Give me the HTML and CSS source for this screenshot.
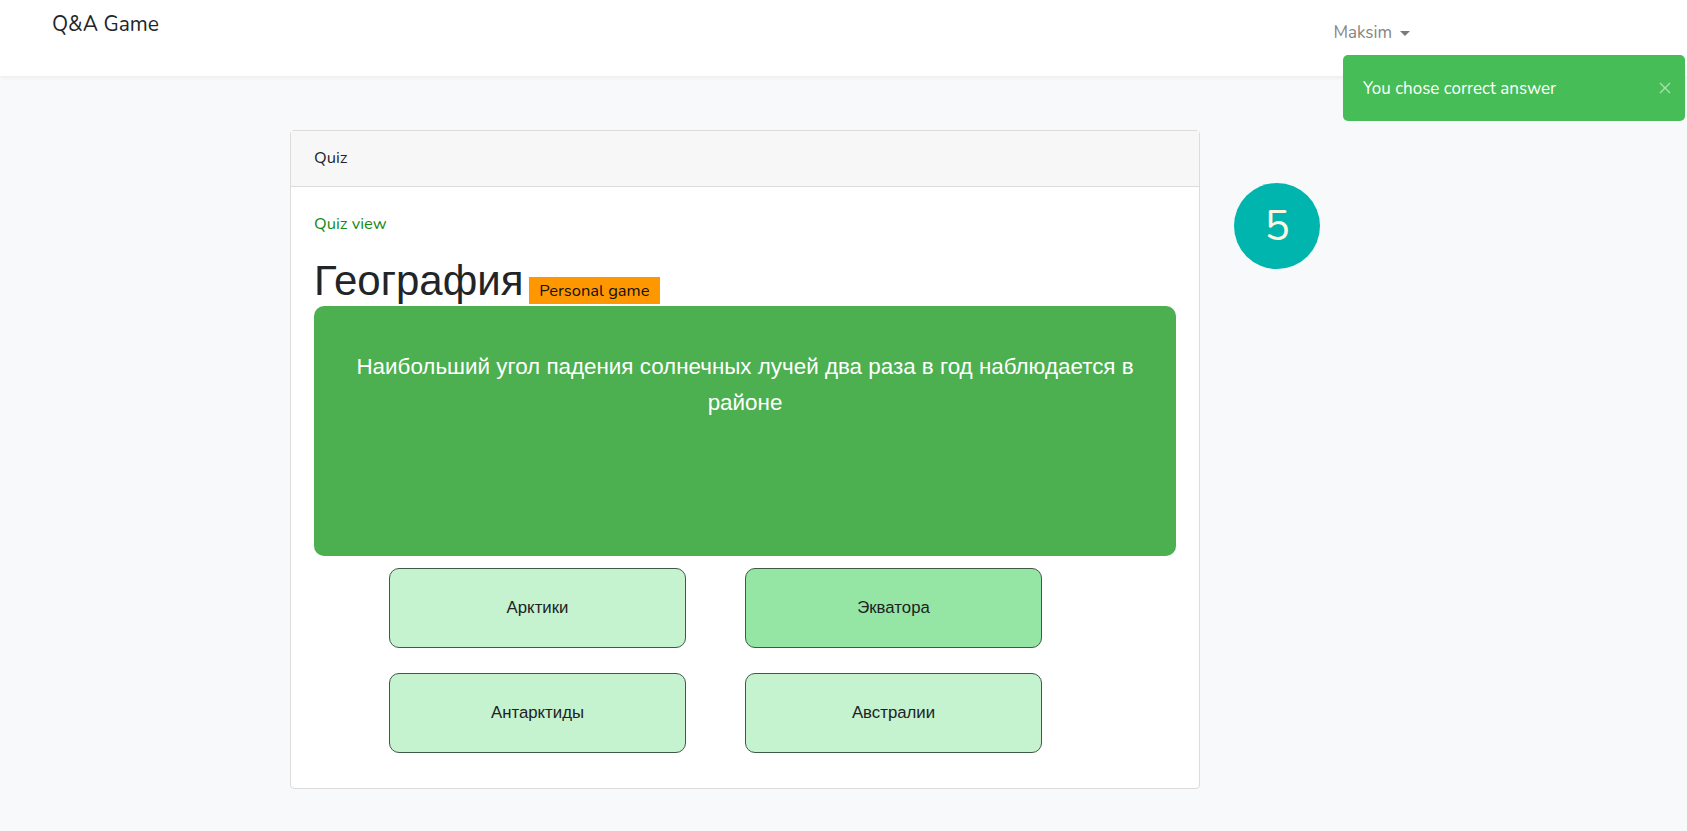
FILE: index.html
```html
<!DOCTYPE html>
<html lang="ru">
<head>
<meta charset="utf-8">
<title>Q&amp;A Game</title>
<link rel="stylesheet" href="styles.css">
</head>
<body>
<nav class="navbar">
  <a class="brand" href="#">Q&amp;A Game</a>
  <div class="user">Maksim <span class="caret"></span></div>
</nav>

<div class="toast">
  <span class="toast-text">You chose correct answer</span>
  <svg class="toast-close" width="12" height="12" viewBox="0 0 12 12"><path d="M1 1L11 11M11 1L1 11" stroke="currentColor" stroke-width="1.4" fill="none"/></svg>
</div>

<main class="page">
  <section class="card">
    <header class="card-header">Quiz</header>
    <div class="card-body">
      <div class="quiz-link">Quiz view</div>
      <h1 class="title">География <span class="badge">Personal game</span></h1>
      <div class="question">Наибольший угол падения солнечных лучей два раза в год наблюдается в районе</div>
      <div class="answers">
        <button class="answer">Арктики</button>
        <button class="answer selected">Экватора</button>
        <button class="answer">Антарктиды</button>
        <button class="answer">Австралии</button>
      </div>
    </div>
  </section>
  <div class="score">5</div>
</main>
</body>
</html>
```
FILE: styles.css
```css
* { box-sizing: border-box; }
html, body { margin: 0; }
body {
  background: #f8f9fa;
  font-family: "Nunito", "Lato", "Open Sans", sans-serif;
  font-size: 16px;
  color: #212529;
  width: 1687px;
  height: 831px;
  overflow: hidden;
}
.navbar {
  height: 76px;
  background: #fff;
  box-shadow: 0 2px 4px rgba(0,0,0,0.05);
  display: flex;
  justify-content: space-between;
  padding: 10px 0 0 52px;
  position: relative;
}
.brand {
  font-size: 21px;
  color: #212529;
  text-decoration: none;
  line-height: 28px;
}
.user {
  margin-right: 277px;
  margin-top: 14px;
  color: #848484;
  font-size: 17px;
  line-height: 18px;
  display: flex;
  align-items: center;
  gap: 8px;
  height: 18px;
}
.caret {
  width: 0; height: 0;
  border-left: 5px solid transparent;
  border-right: 5px solid transparent;
  border-top: 5px solid #7a7a7a;
}
.toast {
  position: absolute;
  left: 1343px;
  top: 55px;
  width: 342px;
  height: 66px;
  background: #46bd56;
  border-radius: 5px;
  display: flex;
  align-items: center;
  justify-content: space-between;
  padding: 0 14px 0 20px;
  color: #fff;
  font-size: 17px;
  z-index: 5;
}
.toast-close { color: #a8e2ae; }
.page {
  display: flex;
  align-items: flex-start;
  padding: 54px 0 0 290px;
  gap: 34px;
}
.card {
  width: 910px;
  background: #fff;
  border: 1px solid #dcdcdc;
  border-radius: 4px;
}
.card-header {
  height: 56px;
  background: #f7f7f7;
  border-bottom: 1px solid #dcdcdc;
  padding: 0 23px 3px;
  display: flex;
  align-items: center;
  font-size: 16.5px;
}
.card-body {
  padding: 25px 23px 35px;
}
.quiz-link {
  color: #138a13;
  font-size: 16.5px;
  line-height: 24px;
}
.title {
  margin: 20px 0 0;
  font-family: "Liberation Sans", Arial, sans-serif;
  font-weight: 400;
  font-size: 42px;
  line-height: 50px;
  color: #212529;
}
.badge {
  display: inline-block;
  vertical-align: -1px;
  background: #ff9800;
  color: #111;
  font-family: "Nunito", "Lato", "Open Sans", sans-serif;
  font-size: 16.5px;
  line-height: 27px;
  padding: 0 10px;
  margin-left: -6px;
}
.question {
  height: 250px;
  background: #4caf50;
  border-radius: 10px;
  color: #fff;
  font-family: "Liberation Sans", Arial, sans-serif;
  font-size: 22.4px;
  line-height: 36px;
  text-align: center;
  padding: 43px 30px 0;
}
.answers {
  display: grid;
  grid-template-columns: 297px 297px;
  column-gap: 59px;
  row-gap: 25px;
  margin: 12px 0 0 75px;
}
.answer {
  height: 80px;
  background: #c5f3d0;
  border: 1px solid #3d5a45;
  border-radius: 10px;
  font-family: "Liberation Sans", Arial, sans-serif;
  font-size: 16.8px;
  color: #222;
  padding: 0;
}
.answer.selected { background: #95e6a5; }
.score {
  margin-top: 53px;
  width: 86px;
  height: 86px;
  border-radius: 50%;
  background: #00b5ad;
  color: #fdf6e3;
  font-size: 42px;
  display: flex;
  align-items: center;
  justify-content: center;
}
```
